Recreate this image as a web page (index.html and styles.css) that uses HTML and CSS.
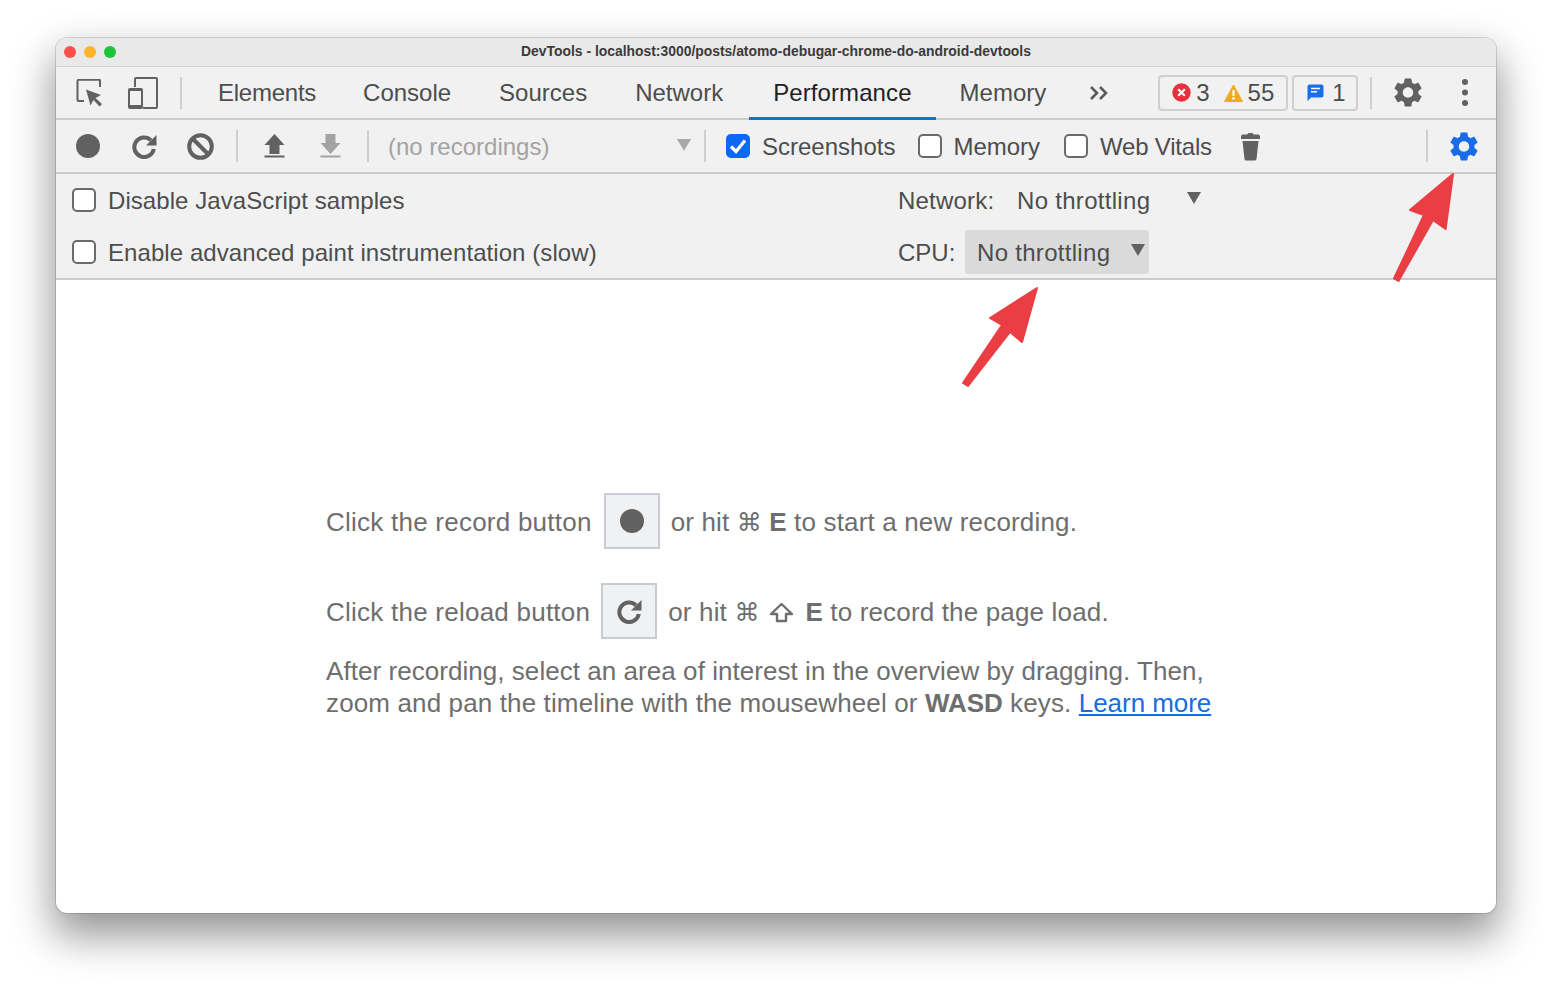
FILE: index.html
```html
<!DOCTYPE html>
<html lang="en">
<head>
<meta charset="utf-8">
<title>DevTools</title>
<link rel="stylesheet" href="styles.css">
</head>
<body>
<div class="window">
  <header class="titlebar">
    <div class="lights"><i class="light red"></i><i class="light yellow"></i><i class="light green"></i></div>
    <div class="title">DevTools - localhost:3000/posts/atomo-debugar-chrome-do-android-devtools</div>
  </header>
  <nav class="tabbar">
    <svg class="ic-inspect" width="28" height="28" viewBox="0 0 28 28"><path d="M8 22H2.5a1 1 0 0 1-1-1V1.8a1 1 0 0 1 1-1H23a1 1 0 0 1 1 1V8" fill="none" stroke="#616161" stroke-width="2"/><path d="M10 10.5 25 16l-5.500 3 6.500 6-2.500 2.500-6-6.500-3 5.500z" fill="#616161"/></svg>
    <svg class="ic-device" width="30" height="32" viewBox="0 0 30 32"><path d="M7 10V2a1 1 0 0 1 1-1h20a1 1 0 0 1 1 1v28a1 1 0 0 1-1 1H15" fill="none" stroke="#616161" stroke-width="2"/><path d="M2 11h11a2 2 0 0 1 2 2v17a2 2 0 0 1-2 2H2a2 2 0 0 1-2-2V13a2 2 0 0 1 2-2zm0 3v14h11V14z" fill="#616161"/></svg>
    <span class="sep sep-tabs"></span>
    <div class="tabs">
      <span class="tab tab-first">Elements</span>
      <span class="tab">Console</span>
      <span class="tab">Sources</span>
      <span class="tab">Network</span>
      <span class="tab active">Performance</span>
      <span class="tab">Memory</span>
    </div>
    <svg class="ic-more" width="20" height="16" viewBox="0 0 20 16"><path d="M2 2l6 6-6 6M11 2l6 6-6 6" fill="none" stroke="#5a5a5a" stroke-width="2.600"/></svg>
    <div class="badge badge-issues">
      <svg width="19" height="19" viewBox="0 0 19 19"><circle cx="9.500" cy="9.500" r="9.200" fill="#e8303a"/><path d="M6.200 6.200l6.600 6.600M12.800 6.200l-6.600 6.600" stroke="#fff" stroke-width="2.200"/></svg>
      <span class="count c3">3</span>
      <svg width="19" height="18" viewBox="0 0 19 18"><path d="M9.500 1 18.500 17.500H.5z" fill="#f2ab1c" stroke="#f2ab1c" stroke-linejoin="round"/><path d="M8.300 6h2.400l-.3 6H8.600zM8.300 13.200h2.400v2.200H8.300z" fill="#fff"/></svg>
      <span class="count">55</span>
    </div>
    <div class="badge badge-msg">
      <svg width="17" height="18" viewBox="0 0 17 18"><path d="M2.500.5h12a2 2 0 0 1 2 2v9a2 2 0 0 1-2 2H4L.5 17V2.500a2 2 0 0 1 2-2z" fill="#1a6fe8"/><path d="M4 4.500h9M4 7.800h6" stroke="#fff" stroke-width="1.600"/></svg>
      <span class="count">1</span>
    </div>
    <span class="sep sep-end"></span>
    <svg class="ic-gear" width="28" height="29" viewBox="2.400 2 19.200 20"><path fill="#616161" d="M19.140 12.940c.04-.3.06-.61.06-.94 0-.32-.02-.64-.07-.94l2.030-1.580c.18-.14.23-.41.12-.61l-1.920-3.320c-.12-.22-.37-.29-.59-.22l-2.390.96c-.5-.38-1.030-.7-1.620-.94l-.36-2.540c-.04-.24-.24-.41-.48-.41h-3.840c-.24 0-.43.17-.47.41l-.36 2.540c-.59.24-1.130.57-1.620.94l-2.390-.96c-.22-.08-.47 0-.59.22L2.740 8.870c-.12.21-.08.47.12.61l2.030 1.580c-.05.3-.09.63-.09.94s.02.64.07.94l-2.030 1.580c-.18.14-.23.41-.12.61l1.920 3.320c.12.22.37.29.59.22l2.390-.96c.5.38 1.030.7 1.620.94l.36 2.540c.05.24.24.41.48.41h3.840c.24 0 .44-.17.47-.41l.36-2.540c.59-.24 1.130-.56 1.620-.94l2.390.96c.22.08.47 0 .59-.22l1.920-3.320c.12-.22.07-.47-.12-.61l-2.010-1.580zM12 15.600c-1.980 0-3.600-1.620-3.600-3.600s1.620-3.600 3.600-3.600 3.600 1.620 3.600 3.600-1.620 3.600-3.600 3.600z"/></svg>
    <svg class="ic-dots" width="6" height="27" viewBox="0 0 6 27"><circle cx="3" cy="3" r="3" fill="#616161"/><circle cx="3" cy="13.500" r="3" fill="#616161"/><circle cx="3" cy="24" r="3" fill="#616161"/></svg>
  </nav>
  <div class="toolbar">
    <svg class="ic-record" width="24" height="24" viewBox="0 0 24 24"><circle cx="12" cy="12" r="12" fill="#616161"/></svg>
    <svg class="ic-reload" width="25" height="25" viewBox="0 0 25 25"><path d="M19 6.200A9.800 9.800 0 1 0 21.800 15" fill="none" stroke="#616161" stroke-width="4"/><path d="M24.500 1v10.500H14z" fill="#616161"/></svg>
    <svg class="ic-block" width="27" height="27" viewBox="0 0 27 27"><circle cx="13.500" cy="13.500" r="11.300" fill="none" stroke="#616161" stroke-width="4"/><path d="M5.500 5.500l16 16" stroke="#616161" stroke-width="4"/></svg>
    <span class="sep sep-a"></span>
    <svg class="ic-up" width="21" height="24" viewBox="0 0 21 24"><path d="M10.500 0 20.500 11H15.500V20H5.500V11H.5z" fill="#616161"/><path d="M.5 22.500h20" stroke="#616161" stroke-width="2"/></svg>
    <svg class="ic-down" width="21" height="24" viewBox="0 0 21 24"><path d="M5.500 0H15.500V9H20.500L10.500 20 .5 9H5.500z" fill="#a3a3a3"/><path d="M.5 22.500h20" stroke="#a3a3a3" stroke-width="2"/></svg>
    <span class="sep sep-b"></span>
    <span class="norec">(no recordings)</span>
    <i class="tri tri-dim"></i>
    <span class="sep sep-c"></span>
    <label class="check check-on"><svg width="18" height="16" viewBox="0 0 18 16"><path d="M2 8.500 7 13.500 16 2.500" fill="none" stroke="#fff" stroke-width="3.200"/></svg></label>
    <span class="lbl lbl-shots">Screenshots</span>
    <label class="check"></label>
    <span class="lbl lbl-mem">Memory</span>
    <label class="check"></label>
    <span class="lbl lbl-vitals">Web Vitals</span>
    <svg class="ic-trash" width="19" height="29" viewBox="0 0 19 29"><path d="M6.500 2.500a1.500 1.500 0 0 1 1.500-1.500h3a1.500 1.500 0 0 1 1.500 1.500H17a2 2 0 0 1 2 2V7H0V4.500a2 2 0 0 1 2-2z" fill="#616161"/><path d="M1.500 9h16L15.500 27a1.800 1.800 0 0 1-1.800 1.600H5.300A1.800 1.800 0 0 1 3.500 27z" fill="#616161"/></svg>
    <span class="sep sep-d"></span>
    <svg class="ic-gear-blue" width="28" height="29" viewBox="2.400 2 19.200 20"><path fill="#1a6be8" d="M19.140 12.940c.04-.3.06-.61.06-.94 0-.32-.02-.64-.07-.94l2.030-1.580c.18-.14.23-.41.12-.61l-1.920-3.320c-.12-.22-.37-.29-.59-.22l-2.390.96c-.5-.38-1.030-.7-1.620-.94l-.36-2.540c-.04-.24-.24-.41-.48-.41h-3.840c-.24 0-.43.17-.47.41l-.36 2.540c-.59.24-1.130.57-1.620.94l-2.390-.96c-.22-.08-.47 0-.59.22L2.740 8.870c-.12.21-.08.47.12.61l2.030 1.580c-.05.3-.09.63-.09.94s.02.64.07.94l-2.030 1.580c-.18.14-.23.41-.12.61l1.920 3.320c.12.22.37.29.59.22l2.390-.96c.5.38 1.030.7 1.620.94l.36 2.540c.05.24.24.41.48.41h3.840c.24 0 .44-.17.47-.41l.36-2.540c.59-.24 1.130-.56 1.620-.94l2.390.96c.22.08.47 0 .59-.22l1.920-3.320c.12-.22.07-.47-.12-.61l-2.010-1.580zM12 15.600c-1.980 0-3.600-1.620-3.600-3.600s1.620-3.600 3.600-3.600 3.600 1.620 3.600 3.600-1.620 3.600-3.600 3.600z"/></svg>
  </div>
  <div class="settings">
    <div class="set-row">
      <label class="check"></label>
      <span class="lbl set-label">Disable JavaScript samples</span>
      <span class="lbl net-label">Network:</span>
      <span class="lbl net-value">No throttling</span>
      <i class="tri tri-net"></i>
    </div>
    <div class="set-row">
      <label class="check"></label>
      <span class="lbl set-label">Enable advanced paint instrumentation (slow)</span>
      <span class="lbl cpu-label">CPU:</span>
      <span class="select"><span class="lbl">No throttling</span><i class="tri tri-cpu"></i></span>
    </div>
  </div>
  <main class="landing">
    <div class="land-line first">
      <span>Click the record button</span>
      <span class="key key-a"><svg width="24" height="24" viewBox="0 0 24 24"><circle cx="12" cy="12" r="12" fill="#616161"/></svg></span>
      <span>or hit <span class="sym">⌘</span>&nbsp;<b class="e">E</b> to start a new recording.</span>
    </div>
    <div class="land-line second">
      <span>Click the reload button</span>
      <span class="key key-b"><svg width="25" height="25" viewBox="0 0 25 25"><path d="M19 6.200A9.800 9.800 0 1 0 21.800 15" fill="none" stroke="#616161" stroke-width="4"/><path d="M24.500 1v10.500H14z" fill="#616161"/></svg></span>
      <span class="shift-line">or hit <span class="sym">⌘</span><svg class="shift" width="25" height="21" viewBox="0 0 25 21"><path d="M12.500 2 23 12h-6v7H8v-7H2z" fill="none" stroke="#6e6e6e" stroke-width="2.400" stroke-linejoin="round"/></svg><b class="e">E</b> to record the page load.</span>
    </div>
    <p class="land-text">After recording, select an area of interest in the overview by dragging. Then,<br><span class="land-tail">zoom and pan the timeline with the mousewheel or <b>WASD</b> keys. <a href="#">Learn more</a></span></p>
  </main>
  <svg class="arrow arrow-cpu" width="84" height="108" viewBox="960 284 84 108"><path d="M1037 288 1022 342 1010 332 968 386 963 383 1002 325 990 318z" fill="#ea3e44" stroke="#ea3e44" stroke-width="2" stroke-linejoin="round"/></svg>
  <svg class="arrow arrow-gear" width="68" height="116" viewBox="1390 170 68 116"><path d="M1453 174 1445.600 229 1433 220 1398.500 281 1394 278.500 1424 215 1410 210z" fill="#ea3e44" stroke="#ea3e44" stroke-width="2" stroke-linejoin="round"/></svg>
</div>
</body>
</html>
```
FILE: styles.css
```css
* { box-sizing: border-box; }
html, body { margin: 0; height: 987px; overflow: hidden; background: #fff; }
body { padding: 38px 56px 0; font-family: "Liberation Sans", Arial, sans-serif; }

.window {
  position: relative;
  width: 1440px;
  height: 875px;
  display: flex;
  flex-direction: column;
  background: #fff;
  border-radius: 11px;
  box-shadow: 0 0 0 1px rgba(0,0,0,.14), 0 20px 42px 3px rgba(0,0,0,.42);
}

.titlebar {
  height: 29px;
  flex: none;
  display: flex;
  align-items: center;
  position: relative;
  background: #e9e9e9;
  border-bottom: 1px solid #d2d2d2;
  border-radius: 11px 11px 0 0;
}
.lights { display: flex; gap: 8px; padding-left: 8px; }
.light { width: 12px; height: 12px; border-radius: 50%; display: block; }
.red { background: #fd5149; }
.yellow { background: #feb42c; }
.green { background: #1fc337; }
.title {
  position: absolute;
  left: 0; right: 0;
  top: 5px;
  text-align: center;
  font-size: 13.900px;
  font-weight: 700;
  color: #3a3a3a;
}

.tabbar, .toolbar {
  flex: none;
  display: flex;
  align-items: center;
  background: #f1f1f1;
  border-bottom: 2px solid #cbcbcb;
}
.tabbar { height: 53px; }
.toolbar { height: 54px; }

.sep { width: 2px; background: #cfcfcf; flex: none; height: 32px; }

.ic-inspect { margin-left: 20px; flex: none; }
.ic-device { margin-left: 24px; flex: none; }
.sep-tabs { margin-left: 22px; }
.tabs { display: flex; margin-left: 12px; align-self: stretch; }
.tab {
  display: flex;
  align-items: center;
  padding: 2px 24px 0;
  font-size: 24px;
  color: #4d4d4d;
  margin-bottom: -2px;
  border-bottom: 3px solid transparent;
}
.tab-first { letter-spacing: -.25px; margin-right: -1px; }
.tab.active { color: #222; border-bottom-color: #1a6be0; margin-left: 2px; letter-spacing: .09px; }
.ic-more { margin-left: 19px; flex: none; }
.badge {
  height: 36px;
  display: flex;
  align-items: center;
  flex: none;
  border: 2px solid #cfcfcf;
  border-radius: 4px;
  font-size: 24px;
  color: #4d4d4d;
}
.badge-issues { width: 130px; margin-left: 49px; padding-left: 12px; }
.count { margin-left: 5px; }
.c3 { margin-right: 14px; }
.badge-msg { width: 66px; margin-left: 4px; padding-left: 13px; }
.badge-msg .count { margin-left: 8px; }
.sep-end { margin-left: 12px; }
.ic-gear { margin-left: 22px; flex: none; }
.ic-dots { margin-left: 40px; flex: none; }

.ic-record { margin-left: 20px; flex: none; }
.ic-reload { margin-left: 32px; flex: none; }
.ic-block { margin-left: 30px; flex: none; }
.sep-a { margin-left: 22px; }
.ic-up { margin-left: 26px; flex: none; }
.ic-down { margin-left: 35px; flex: none; }
.sep-b { margin-left: 26px; }
.norec { margin-left: 19px; padding-top: 2px; font-size: 24px; color: #a3a3a3; width: 289px; flex: none; }
.tri {
  display: block;
  flex: none;
  width: 0; height: 0;
  border-left: 7px solid transparent;
  border-right: 7px solid transparent;
  border-top: 12px solid #616161;
}
.tri-dim { border-top-color: #a9a9a9; margin-top: -2px; }
.sep-c { margin-left: 13px; }

.check {
  display: flex;
  align-items: center;
  justify-content: center;
  flex: none;
  width: 24px; height: 24px;
  background: #fff;
  border: 2px solid #6a6a6a;
  border-radius: 5px;
}
.check-on { background: #0b68f5; border-color: #0b68f5; margin-left: 20px; }
.lbl { font-size: 24px; color: #4d4d4d; flex: none; padding-top: 2px; }
.lbl-shots { margin-left: 12px; margin-right: 23px; }
.lbl-mem { margin-left: 11px; margin-right: 24px; }
.lbl-vitals { margin-left: 12px; letter-spacing: -.2px; }
.ic-trash { margin-left: 29px; flex: none; }
.sep-d { margin-left: 166px; }
.ic-gear-blue { margin-left: 22px; flex: none; }

.settings {
  flex: none;
  height: 106px;
  background: #f1f1f1;
  border-bottom: 2px solid #cbcbcb;
  display: flex;
  flex-direction: column;
}
.set-row { height: 52px; display: flex; align-items: center; padding-left: 16px; }
.set-label { margin-left: 12px; width: 790px; letter-spacing: .07px; }
.net-label { width: 119px; letter-spacing: .2px; }
.net-value { width: 170px; letter-spacing: .3px; }
.tri-net { margin-top: -4px; }
.cpu-label { width: 67px; }
.select {
  display: flex;
  align-items: center;
  width: 184px;
  height: 44px;
  padding-left: 12px;
  background: #dadada;
  border-radius: 3px;
}
.select .lbl { width: 154px; letter-spacing: .3px; }
.tri-cpu { margin-top: -4px; }

.landing {
  flex: 1;
  padding: 213px 0 0 270px;
  font-size: 26px;
  color: #6e6e6e;
}
.land-line { display: flex; align-items: center; height: 56px; letter-spacing: .24px; padding-top: 2px; }
.second { margin-top: 34px; }
.key {
  width: 56px; height: 56px;
  flex: none;
  display: flex;
  align-items: center;
  justify-content: center;
  background: #eff1f3;
  border: 2px solid #c8ccd0;
  margin: -2px 11px 0 12px;
}
.key-b { margin-left: 11px; }
.first > span:last-child { letter-spacing: .16px; }
.shift-line { letter-spacing: .16px; }
.sym { font-family: "DejaVu Sans", sans-serif; font-size: 25px; letter-spacing: 0; }
.e { font-weight: 700; }
.shift { margin: 0 11px 0 10px; vertical-align: -2px; }
.land-text { margin: 15px 0 0; padding-top: 1px; line-height: 32px; letter-spacing: .05px; }
.land-tail { letter-spacing: .13px; }
.land-text b { font-weight: 700; letter-spacing: -.05px; }
.land-text a { color: #1a6be0; letter-spacing: -.05px; }

.arrow { position: absolute; pointer-events: none; }
.arrow-cpu { left: 904px; top: 246px; }
.arrow-gear { left: 1334px; top: 132px; }
```
